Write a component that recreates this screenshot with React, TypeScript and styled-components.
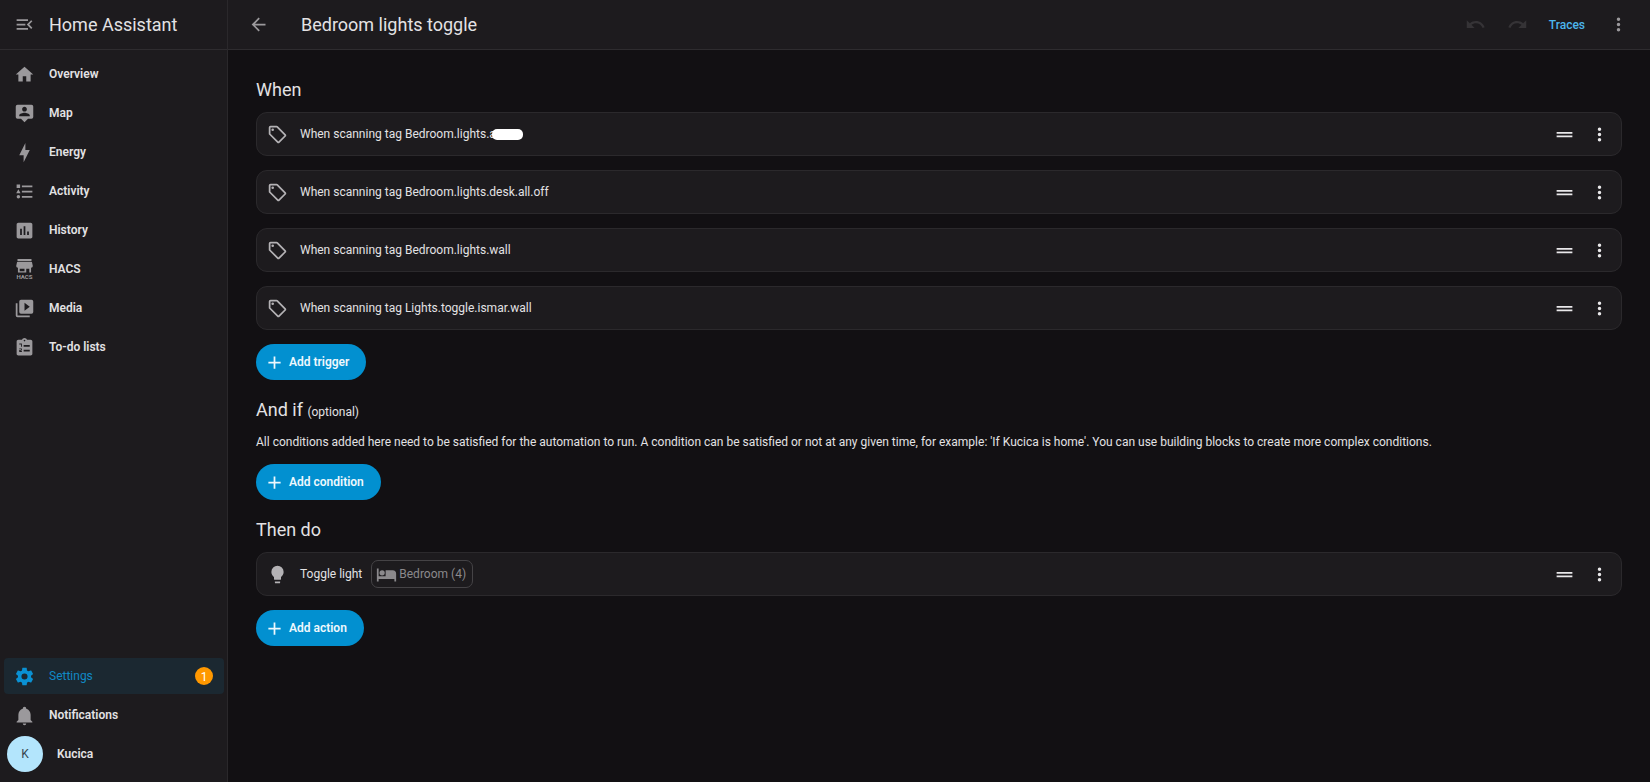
import React from "react";
import styled, { createGlobalStyle } from "styled-components";

const GlobalStyle = createGlobalStyle`
  *, *::before, *::after { box-sizing: border-box; }
  body {
    margin: 0;
    background: #121013;
    color: #e3e2e4;
    font-family: Roboto, "Liberation Sans", sans-serif;
    font-size: 12px;
    line-height: 20px;
  }
  button { font: inherit; color: inherit; background: none; border: 0; padding: 0; cursor: pointer; }
  a { color: inherit; text-decoration: none; }
  h1, h2, p, ul { margin: 0; padding: 0; font-weight: 400; }
  ul { list-style: none; }
`;

const icons = {
  menuOpen: "M21,15.61L19.59,17L14.58,12L19.59,7L21,8.39L17.44,12L21,15.61M3,6H16V8H3V6M3,13V11H13V13H3M3,18V16H16V18H3Z",
  arrowLeft: "M20,11V13H8L13.5,18.5L12.08,19.92L4.16,12L12.08,4.08L13.5,5.5L8,11H20Z",
  home: "M10,20V14H14V20H19V12H22L12,3L2,12H5V20H10Z",
  map: "M20,2H4A2,2 0 0,0 2,4V16A2,2 0 0,0 4,18H8L12,22L16,18H20A2,2 0 0,0 22,16V4A2,2 0 0,0 20,2M12,4.3C13.5,4.3 14.7,5.5 14.7,7C14.7,8.5 13.5,9.7 12,9.7C10.5,9.7 9.3,8.5 9.3,7C9.3,5.5 10.5,4.3 12,4.3M18,15H6V14.1C6,12.1 10,11 12,11C14,11 18,12.1 18,14.1V15Z",
  energy: "M11 15H6L13 1V9H18L11 23V15Z",
  activity: "M5,9.5L7.5,14H2.5L5,9.5M3,4H7V8H3V4M5,20A2,2 0 0,0 7,18A2,2 0 0,0 5,16A2,2 0 0,0 3,18A2,2 0 0,0 5,20M9,5V7H21V5H9M9,19H21V17H9V19M9,13H21V11H9V13Z",
  history: "M9 17H7V10H9V17M13 17H11V7H13V17M17 17H15V13H17V17M19 3H5C3.9 3 3 3.9 3 5V19C3 20.1 3.9 21 5 21H19C20.1 21 21 20.1 21 19V5C21 3.9 20.1 3 19 3Z",
  media: "M4,6H2V20A2,2 0 0,0 4,22H18V20H4V6M20,2H8A2,2 0 0,0 6,4V16A2,2 0 0,0 8,18H20A2,2 0 0,0 22,16V4A2,2 0 0,0 20,2M12,14.5V5.5L18,10L12,14.5Z",
  todo: "M19 3H14.82C14.4 1.84 13.3 1 12 1S9.6 1.84 9.18 3H5C3.9 3 3 3.9 3 5V19C3 20.1 3.9 21 5 21H19C20.1 21 21 20.1 21 19V5C21 3.9 20.1 3 19 3M12 3C12.55 3 13 3.45 13 4S12.55 5 12 5 11 4.55 11 4 11.45 3 12 3M6 7.5H9V11H8V8.5H6ZM6 13H9V15.5H7.5V16H9V17H6V14.8H8V14H6ZM11 9H18V11H11ZM11 14.5H18V16.5H11Z",
  cog: "M12,15.5A3.5,3.5 0 0,1 8.5,12A3.5,3.5 0 0,1 12,8.5A3.5,3.5 0 0,1 15.5,12A3.5,3.5 0 0,1 12,15.5M19.43,12.97C19.47,12.65 19.5,12.33 19.5,12C19.5,11.67 19.47,11.34 19.43,11L21.54,9.37C21.73,9.22 21.78,8.95 21.66,8.73L19.66,5.27C19.54,5.05 19.27,4.96 19.05,5.05L16.56,6.05C16.04,5.66 15.5,5.32 14.87,5.07L14.5,2.42C14.46,2.18 14.25,2 14,2H10C9.75,2 9.54,2.18 9.5,2.42L9.13,5.07C8.5,5.32 7.96,5.66 7.44,6.05L4.95,5.05C4.73,4.96 4.46,5.05 4.34,5.27L2.34,8.73C2.21,8.95 2.27,9.22 2.46,9.37L4.57,11C4.53,11.34 4.5,11.67 4.5,12C4.5,12.33 4.53,12.65 4.57,12.97L2.46,14.63C2.27,14.78 2.21,15.05 2.34,15.27L4.34,18.73C4.46,18.95 4.73,19.03 4.95,18.95L7.44,17.94C7.96,18.34 8.5,18.68 9.13,18.93L9.5,21.58C9.54,21.82 9.75,22 10,22H14C14.25,22 14.46,21.82 14.5,21.58L14.87,18.93C15.5,18.67 16.04,18.34 16.56,17.94L19.05,18.95C19.27,19.03 19.54,18.95 19.66,18.73L21.66,15.27C21.78,15.05 21.73,14.78 21.54,14.63L19.43,12.97Z",
  bell: "M21,19V20H3V19L5,17V11C5,7.9 7.03,5.17 10,4.29C10,4.19 10,4.1 10,4A2,2 0 0,1 12,2A2,2 0 0,1 14,4C14,4.1 14,4.19 14,4.29C16.97,5.17 19,7.9 19,11V17L21,19M14,21A2,2 0 0,1 12,23A2,2 0 0,1 10,21",
  tag: "M21.41 11.58L12.41 2.58A2 2 0 0 0 11 2H4A2 2 0 0 0 2 4V11A2 2 0 0 0 2.59 12.42L11.59 21.42A2 2 0 0 0 13 22A2 2 0 0 0 14.41 21.41L21.41 14.41A2 2 0 0 0 22 13A2 2 0 0 0 21.41 11.58M13 20L4 11V4H11L20 13M6.5 5A1.5 1.5 0 1 1 5 6.5A1.5 1.5 0 0 1 6.5 5Z",
  undo: "M12.5,8C9.85,8 7.45,9 5.6,10.6L2,7V16H11L7.38,12.38C8.77,11.22 10.54,10.5 12.5,10.5C16.04,10.5 19.05,12.81 20.1,16L22.47,15.22C21.08,11.03 17.15,8 12.5,8Z",
  redo: "M18.4,10.6C16.55,9 14.15,8 11.5,8C6.85,8 2.92,11.03 1.54,15.22L3.9,16C4.95,12.81 7.95,10.5 11.5,10.5C13.45,10.5 15.23,11.22 16.62,12.38L13,16H22V7L18.4,10.6Z",
  dots: "M12,16A2,2 0 0,1 14,18A2,2 0 0,1 12,20A2,2 0 0,1 10,18A2,2 0 0,1 12,16M12,10A2,2 0 0,1 14,12A2,2 0 0,1 12,14A2,2 0 0,1 10,12A2,2 0 0,1 12,10M12,4A2,2 0 0,1 14,6A2,2 0 0,1 12,8A2,2 0 0,1 10,6A2,2 0 0,1 12,4Z",
  drag: "M21 11H3V9H21V11M21 13H3V15H21V13Z",
  bulb: "M12,2A7,7 0 0,0 5,9C5,11.38 6.19,13.47 8,14.74V17A1,1 0 0,0 9,18H15A1,1 0 0,0 16,17V14.74C17.81,13.47 19,11.38 19,9A7,7 0 0,0 12,2M9,21A1,1 0 0,0 10,22H14A1,1 0 0,0 15,21V20H9V21Z",
  bed: "M19,7H11V14H3V5H1V20H3V17H21V20H23V11A4,4 0 0,0 19,7M7,13A3,3 0 0,0 10,10A3,3 0 0,0 7,7A3,3 0 0,0 4,10A3,3 0 0,0 7,13Z",
  plus: "M19,13H13V19H11V13H5V11H11V5H13V11H19V13Z",
  hacs: "M4 0H20V2.500H4ZM3.500 3.500H20.500L21.500 8Q21.500 10 19.500 10V15.500H4.500V10Q2.500 10 2.500 8ZM6.500 11V14H12V11ZM14 11V15.500H17.500V11Z",
};

type IconName = keyof typeof icons;

const Svg = styled.svg`
  display: block;
  flex: none;
  width: 21px;
  height: 21px;
  fill: currentColor;
  overflow: visible;
`;

const Icon = ({ name }: { name: IconName }) => (
  <Svg viewBox="0 0 24 24" aria-hidden="true">
    <path fillRule="evenodd" d={icons[name]} />
    {name === "hacs" && (
      <text x="12" y="23" fontSize="7" fontWeight="700" textAnchor="middle">HACS</text>
    )}
  </Svg>
);

const Page = styled.div`
  display: grid;
  grid-template-columns: 228px minmax(0, 1fr);
  min-height: 100vh;
`;

const Sidebar = styled.aside`
  display: flex;
  flex-direction: column;
  background: #1d1b1e;
  border-right: 1px solid #2a282b;
`;

const Bar = styled.header`
  display: flex;
  align-items: center;
  height: 50px;
  background: #1d1b1e;
  border-bottom: 1px solid #2e2c2f;
`;

const SidebarBar = styled(Bar)`
  gap: 14px;
  padding: 0 14px;
`;

const MainBar = styled(Bar)`
  gap: 32px;
  padding: 0 21px 0 20px;
`;

const BarTitle = styled.h1`
  font-size: 18px;
  line-height: 24px;
`;

const IconButton = styled.button<{ $bright?: boolean }>`
  display: flex;
  color: ${(p) => (p.$bright ? "#e9e8ea" : "#9b999c")};
  &:disabled { color: #353336; cursor: default; }
`;

const BarActions = styled.div`
  display: flex;
  align-items: center;
  gap: 21px;
  margin-left: auto;
`;

const TracesButton = styled.button`
  color: #4cb5ec;
  font-weight: 500;
  margin-right: 2px;
`;

const Nav = styled.nav`
  display: flex;
  flex: 1;
  flex-direction: column;
  justify-content: space-between;
  padding: 6px 3px 10px 4px;
`;

const NavList = styled.ul`
  display: flex;
  flex-direction: column;
  gap: 3px;
`;

const NavLink = styled.a<{ $active?: boolean; $avatar?: boolean }>`
  display: flex;
  align-items: center;
  gap: 14px;
  height: 36px;
  padding: 0 11px 0 ${(p) => (p.$avatar ? 3 : 10)}px;
  border-radius: 4px;
  font-weight: ${(p) => (p.$active ? 400 : 600)};
  color: ${(p) => (p.$active ? "#1089c5" : "#e3e2e4")};
  background: ${(p) => (p.$active ? "#1b2831" : "transparent")};
  > svg { color: ${(p) => (p.$active ? "#0a91d3" : "#9b999c")}; }
`;

const Badge = styled.span`
  display: grid;
  place-items: center;
  width: 18px;
  height: 18px;
  margin-left: auto;
  border-radius: 50%;
  background: #ff9800;
  color: #fff;
`;

const Avatar = styled.span`
  display: grid;
  place-items: center;
  width: 36px;
  height: 36px;
  border-radius: 50%;
  background: #b3e5fc;
  color: #37474f;
  font-weight: 400;
`;

const Content = styled.main`
  display: flex;
  flex-direction: column;
  gap: 18px;
  padding: 28px;
`;

const Section = styled.section`
  display: flex;
  flex-direction: column;
  align-items: flex-start;
`;

const SectionTitle = styled.h2`
  margin-bottom: 10px;
  font-size: 18px;
  line-height: 24px;
`;

const Optional = styled.small`
  font-size: 12px;
  line-height: 1;
`;

const Description = styled.p`
  margin-bottom: 12px;
`;

const Cards = styled.ul`
  display: flex;
  flex-direction: column;
  align-self: stretch;
  gap: 14px;
  margin-bottom: 14px;
`;

const Card = styled.li`
  display: flex;
  align-items: center;
  height: 44px;
  padding: 0 11px 0 10px;
  border: 1px solid #2b292c;
  border-radius: 11px;
  background: #1d1b1e;
  > svg { color: #b4b2b5; }
`;

const CardLabel = styled.span`
  display: flex;
  align-items: center;
  margin-left: 12px;
`;

const Redaction = styled.span`
  z-index: 1;
  width: 31px;
  height: 11px;
  margin-left: -4px;
  border-radius: 5px;
  background: #fff;
`;

const Chip = styled.span`
  display: flex;
  align-items: center;
  gap: 2px;
  height: 28px;
  margin-left: 9px;
  padding: 0 6px 0 4px;
  border: 1px solid #454346;
  border-radius: 7px;
  color: #8b898c;
`;

const CardActions = styled.div`
  display: flex;
  gap: 14px;
  margin-left: auto;
`;

const AddButton = styled.button`
  display: flex;
  align-items: center;
  gap: 4px;
  height: 36px;
  padding: 0 17px 0 8px;
  border-radius: 18px;
  background: #0290d0;
  color: #eef8fd;
  font-weight: 600;
`;

const mainNav: { icon: IconName; label: string }[] = [
  { icon: "home", label: "Overview" },
  { icon: "map", label: "Map" },
  { icon: "energy", label: "Energy" },
  { icon: "activity", label: "Activity" },
  { icon: "history", label: "History" },
  { icon: "hacs", label: "HACS" },
  { icon: "media", label: "Media" },
  { icon: "todo", label: "To-do lists" },
];

const triggers: { label: string; redacted?: boolean }[] = [
  { label: "When scanning tag Bedroom.lights.a", redacted: true },
  { label: "When scanning tag Bedroom.lights.desk.all.off" },
  { label: "When scanning tag Bedroom.lights.wall" },
  { label: "When scanning tag Lights.toggle.ismar.wall" },
];

const RowCard = ({ icon, children }: { icon: IconName; children: React.ReactNode }) => (
  <Card>
    <Icon name={icon} />
    <CardLabel>{children}</CardLabel>
    <CardActions>
      <IconButton $bright aria-label="Reorder"><Icon name="drag" /></IconButton>
      <IconButton $bright aria-label="Row menu"><Icon name="dots" /></IconButton>
    </CardActions>
  </Card>
);

const Add = ({ label }: { label: string }) => (
  <AddButton><Icon name="plus" />{label}</AddButton>
);

export default function App() {
  return (
    <>
      <GlobalStyle />
      <Page>
        <Sidebar>
          <SidebarBar>
            <IconButton aria-label="Collapse sidebar"><Icon name="menuOpen" /></IconButton>
            <BarTitle as="div">Home Assistant</BarTitle>
          </SidebarBar>
          <Nav aria-label="Main">
            <NavList>
              {mainNav.map((item) => (
                <li key={item.label}>
                  <NavLink href="#"><Icon name={item.icon} />{item.label}</NavLink>
                </li>
              ))}
            </NavList>
            <NavList>
              <li>
                <NavLink href="#" $active aria-current="page">
                  <Icon name="cog" />Settings<Badge>1</Badge>
                </NavLink>
              </li>
              <li><NavLink href="#"><Icon name="bell" />Notifications</NavLink></li>
              <li><NavLink href="#" $avatar><Avatar>K</Avatar>Kucica</NavLink></li>
            </NavList>
          </Nav>
        </Sidebar>
        <div>
          <MainBar>
            <IconButton aria-label="Back"><Icon name="arrowLeft" /></IconButton>
            <BarTitle>Bedroom lights toggle</BarTitle>
            <BarActions>
              <IconButton disabled aria-label="Undo"><Icon name="undo" /></IconButton>
              <IconButton disabled aria-label="Redo"><Icon name="redo" /></IconButton>
              <TracesButton>Traces</TracesButton>
              <IconButton aria-label="Menu"><Icon name="dots" /></IconButton>
            </BarActions>
          </MainBar>
          <Content>
            <Section>
              <SectionTitle>When</SectionTitle>
              <Cards>
                {triggers.map((t) => (
                  <RowCard key={t.label} icon="tag">{t.label}{t.redacted && <Redaction />}</RowCard>
                ))}
              </Cards>
              <Add label="Add trigger" />
            </Section>
            <Section>
              <SectionTitle>And if <Optional>(optional)</Optional></SectionTitle>
              <Description>
                All conditions added here need to be satisfied for the automation to run. A condition can be satisfied or not at any given time, for example: 'If Kucica is home'. You can use building blocks to create more complex conditions.
              </Description>
              <Add label="Add condition" />
            </Section>
            <Section>
              <SectionTitle>Then do</SectionTitle>
              <Cards>
                <RowCard icon="bulb">Toggle light<Chip><Icon name="bed" />Bedroom (4)</Chip></RowCard>
              </Cards>
              <Add label="Add action" />
            </Section>
          </Content>
        </div>
      </Page>
    </>
  );
}
